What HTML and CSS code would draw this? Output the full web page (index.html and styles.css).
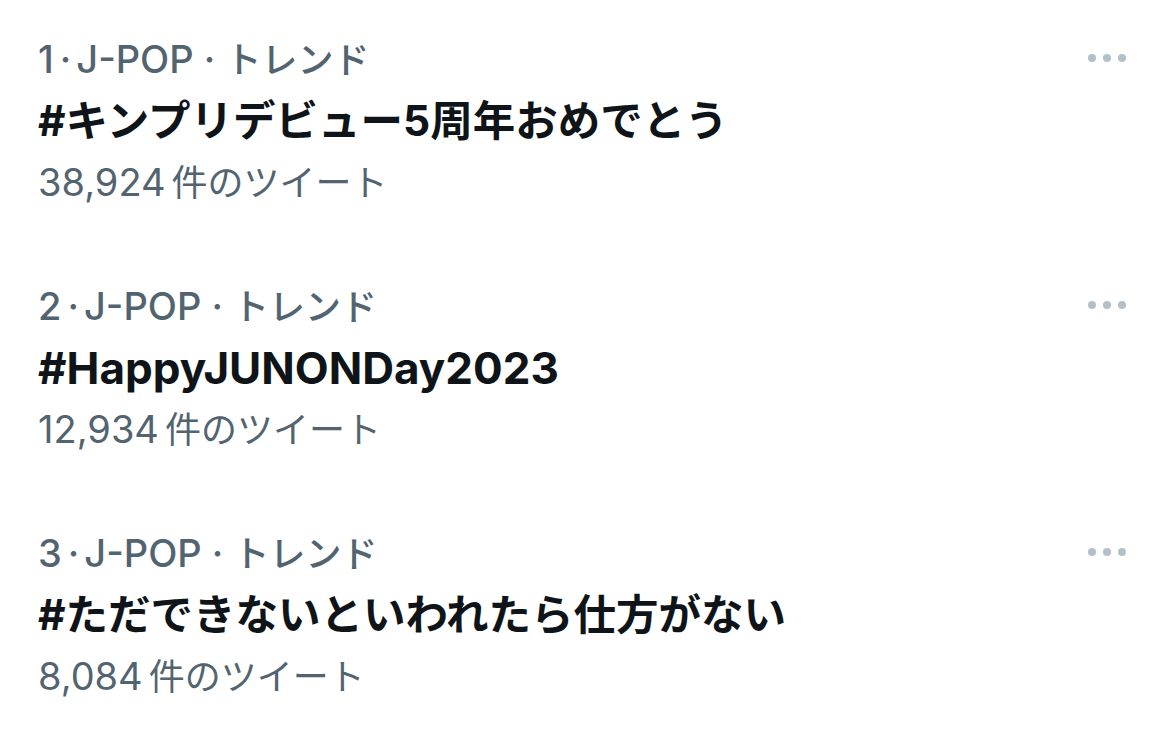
FILE: index.html
```html
<!DOCTYPE html>
<html lang="ja">
<head>
<meta charset="UTF-8">
<meta name="viewport" content="width=device-width, initial-scale=1.0">
<title>トレンド</title>
<link rel="stylesheet" href="styles.css">
</head>
<body>
<section class="trends">
  <div class="trend">
    <div class="trend-text">
      <div class="meta">1<span class="sep">·</span>J-POP · <span class="ja">トレンド</span></div>
      <div class="name ja">#キンプリデビュー5周年おめでとう</div>
      <div class="count">38,924<span class="ja">件のツイート</span></div>
    </div>
    <div class="more"><span></span><span></span><span></span></div>
  </div>
  <div class="trend">
    <div class="trend-text">
      <div class="meta">2<span class="sep">·</span>J-POP · <span class="ja">トレンド</span></div>
      <div class="name">#HappyJUNONDay2023</div>
      <div class="count">12,934<span class="ja">件のツイート</span></div>
    </div>
    <div class="more"><span></span><span></span><span></span></div>
  </div>
  <div class="trend">
    <div class="trend-text">
      <div class="meta">3<span class="sep">·</span>J-POP · <span class="ja">トレンド</span></div>
      <div class="name ja">#ただできないといわれたら仕方がない</div>
      <div class="count">8,084<span class="ja">件のツイート</span></div>
    </div>
    <div class="more"><span></span><span></span><span></span></div>
  </div>
</section>
</body>
</html>
```

FILE: styles.css
```css
body {
  margin: 0;
  background: #fff;
  font-family: 'Inter', 'Noto Sans CJK JP', sans-serif;
}
.trends {
  padding: 0 44px 0 38px;
}
.trend {
  display: flex;
  justify-content: space-between;
  align-items: flex-start;
  padding: 32px 0 37px;
}
.meta, .count {
  font-size: 38px;
  line-height: 54px;
  color: #536471;
}
.meta {
  font-weight: 500;
}
.meta .sep {
  margin: 0 5px 0 6px;
}
.meta .ja {
  font-size: 36px;
}
.count .ja {
  font-size: 36px;
  margin-left: 6px;
}
.name {
  font-size: 44px;
  line-height: 68px;
  font-weight: 700;
  color: #0f1419;
}
.name.ja {
  font-size: 42.5px;
}
.more {
  display: flex;
  gap: 7px;
  margin-top: 22px;
}
.more span {
  width: 8px;
  height: 8px;
  border-radius: 50%;
  background: #b3c0c9;
}
```
